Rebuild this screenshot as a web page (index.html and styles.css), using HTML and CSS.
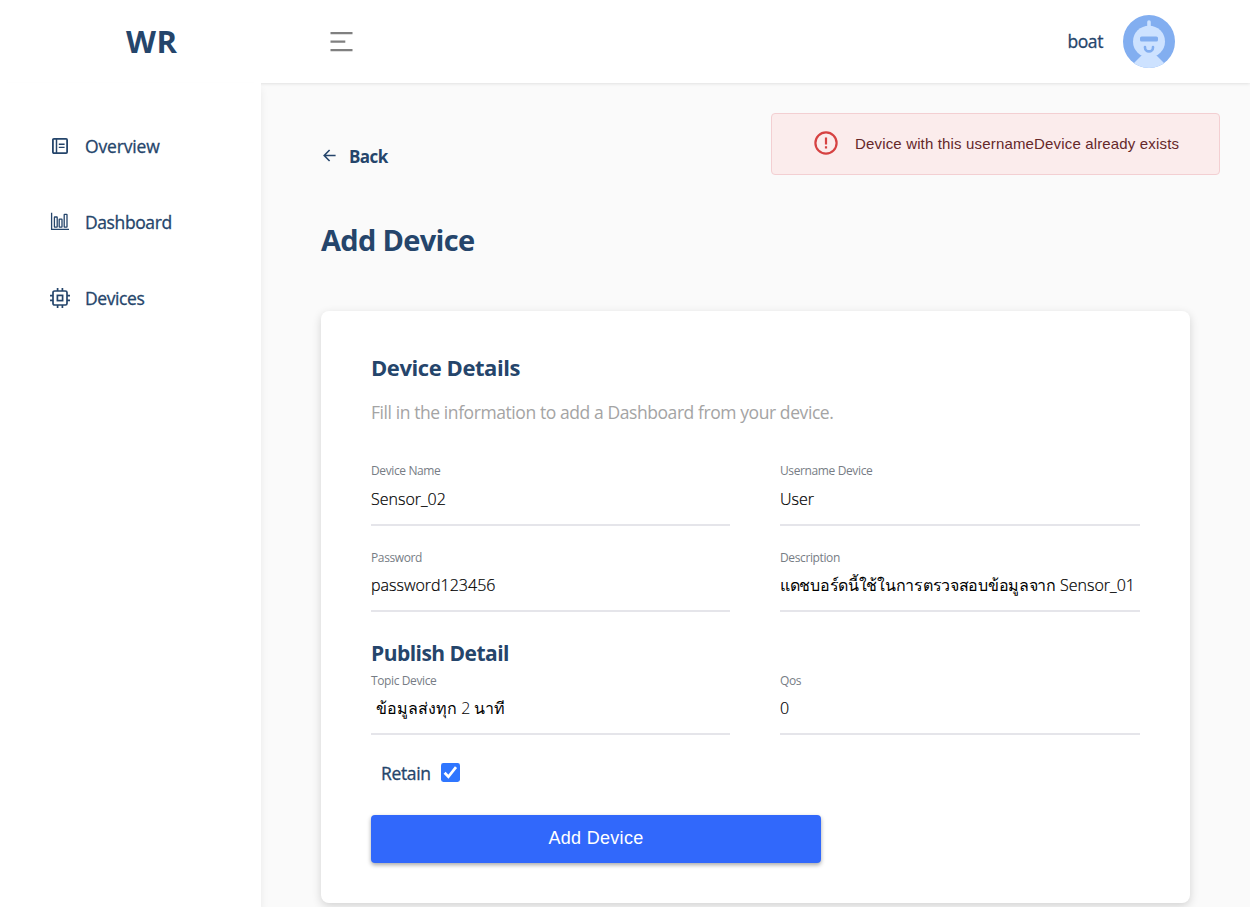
FILE: index.html
```html
<!DOCTYPE html>
<html lang="en">
<head>
<meta charset="utf-8">
<title>Add Device</title>
<link rel="stylesheet" href="styles.css">
</head>
<body>
<div class="app">
  <header class="topbar">
    <div class="brand">WR</div>
    <svg class="menu-icon" viewBox="0 0 24 22" fill="none" stroke="#808080" stroke-width="2.2"><path d="M0.5 2.2H22.5M0.5 10.6H15.3M0.5 19.2H22.5"/></svg>
    <div class="account">
      <span class="user-name">boat</span>
      <svg class="avatar" viewBox="0 0 52 53"><defs><clipPath id="disc"><ellipse cx="26" cy="26.5" rx="26" ry="26.5"/></clipPath></defs><g clip-path="url(#disc)"><rect width="52" height="53" fill="#82aef0"/><g fill="#cde2ff"><path d="M24.2 7a1.8 1.8 0 0 1 3.6 0v6h-3.6z"/><ellipse cx="26" cy="26.5" rx="16" ry="15.8"/><path d="M18.5 40.5h15l8.5 8.5v5H10v-5z"/></g><rect x="17" y="21.5" width="18" height="5" rx="1.6" fill="#82aef0"/><path d="M22 32v.4a4 4 0 0 0 8 0V32" fill="none" stroke="#82aef0" stroke-width="2.6" stroke-linecap="round"/></g></svg>
    </div>
  </header>
  <div class="body">
    <nav class="sidebar">
      <a class="nav-item"><svg class="nav-icon" viewBox="0 0 20 20" fill="none" stroke="currentColor" stroke-width="1.8"><rect x="2.9" y="2.9" width="14.2" height="14.2" rx="1"/><path d="M6.5 3v14" stroke-width="1.5"/><path d="M8.8 8.2h5.8M8.8 11.4h5.8" stroke-width="1.4"/></svg><span class="nav-text wide">Overview</span></a>
      <a class="nav-item"><svg class="nav-icon" viewBox="0 0 20 20" fill="none" stroke="currentColor" stroke-width="1.3"><path d="M1.6 0.8V17.4H19" /><rect x="4.4" y="5" width="2.8" height="10.2" rx=".4"/><rect x="9.2" y="7.2" width="2.8" height="8" rx=".4"/><rect x="14.2" y="2.4" width="2.8" height="12.8" rx=".4"/></svg><span class="nav-text">Dashboard</span></a>
      <a class="nav-item"><svg class="nav-icon" viewBox="0 0 20 20" fill="none" stroke="currentColor" stroke-width="1.7"><rect x="3" y="3" width="14" height="14" rx="1.6"/><rect x="7.4" y="7.4" width="5.2" height="5.2"/><path d="M7.6 0v3M12.4 0v3M7.6 17v3M12.4 17v3M0 7.6h3M0 12.4h3M17 7.6h3M17 12.4h3"/></svg><span class="nav-text">Devices</span></a>
    </nav>
    <main class="content">
      <div class="alert" role="alert">
        <svg class="alert-icon" viewBox="0 0 24 24" fill="none" stroke="#d64242" stroke-width="2.2"><circle cx="12" cy="12" r="10.6"/><path d="M12 6.6v6.8M12 15.2v2.4"/></svg>
        <span>Device with this usernameDevice already exists</span>
      </div>
      <a class="back"><svg class="back-icon" viewBox="0 0 13 13" fill="none" stroke="currentColor" stroke-width="1.6"><path d="M12.6 6.5H1.4M6.6 1L1.2 6.5 6.6 12"/></svg><span>Back</span></a>
      <h1 class="title">Add Device</h1>
      <section class="card">
        <h2 class="card-title">Device Details</h2>
        <p class="hint">Fill in the information to add a Dashboard from your device.</p>
        <div class="fields">
          <div class="field tall"><span class="label">Device Name</span><span class="value">Sensor_02</span></div>
          <div class="field tall"><span class="label">Username Device</span><span class="value">User</span></div>
          <div class="field"><span class="label">Password</span><span class="value">password123456</span></div>
          <div class="field"><span class="label">Description</span><span class="value"><span class="thai">แดชบอร์ดนี้ใช้ในการตรวจสอบข้อมูลจาก</span> Sensor_01</span></div>
        </div>
        <h2 class="section-title">Publish Detail</h2>
        <div class="fields">
          <div class="field"><span class="label">Topic Device</span><span class="value indented">ข้อมูลส่งทุก 2 นาที</span></div>
          <div class="field"><span class="label">Qos</span><span class="value">0</span></div>
        </div>
        <div class="retain"><span>Retain</span><svg class="check" viewBox="0 0 19 19"><rect width="19" height="19" rx="2.4" fill="#2f76ff"/><path d="M3.6 9.8l3.8 4L15 4.2" fill="none" stroke="#fff" stroke-width="2.7"/></svg></div>
        <button class="submit">Add Device</button>
      </section>
    </main>
  </div>
</div>
</body>
</html>
```
FILE: styles.css
```css
* { box-sizing: border-box; }
body { margin: 0; background: #fff; color: #25456b; font-family: "Open Sans", "Noto Sans", sans-serif; }
.app { height: 907px; overflow: hidden; display: flex; flex-direction: column; }
.topbar { position: relative; z-index: 1; height: 83px; flex: none; display: flex; align-items: center; background: #fff; box-shadow: 0 0 4px rgba(0,0,0,.16); }
.brand { width: 261px; height: 83px; flex: none; padding: 0 0 2px 126px; display: flex; align-items: center; background: #fff; font-size: 31px; font-weight: 700; letter-spacing: .6px; }
.menu-icon { width: 24px; height: 22px; margin-left: 69px; }
.account { margin-left: auto; padding-right: 75px; display: flex; align-items: center; gap: 20px; font-size: 17.5px; }
.user-name { letter-spacing: -.4px; padding-bottom: 1px; -webkit-text-stroke: .3px; }
.avatar { width: 52px; height: 53px; display: block; }
.body { flex: 1; min-height: 0; display: flex; }
.sidebar { position: relative; z-index: 2; width: 261px; flex: none; padding: 43px 0 0 50px; display: flex; flex-direction: column; gap: 36px; background: #fff; font-size: 17.5px; box-shadow: 0 6px 8px rgba(0,0,0,.07); }
.nav-item { height: 40px; display: flex; align-items: center; gap: 15px; }
.nav-icon { width: 20px; height: 20px; }
.nav-text { letter-spacing: -.4px; -webkit-text-stroke: .3px; }
.nav-text.wide { letter-spacing: -.15px; }
.content { flex: 1; position: relative; padding: 60px 60px 0; background: #fafafa; }
.alert { position: absolute; right: 30px; top: 30px; width: 449px; height: 62px; padding: 0 0 2px 42px; display: flex; align-items: center; gap: 17px; border: 1px solid #f3cfd2; border-radius: 4px; background: #fbecec; color: #65282a; font: 15px "Liberation Sans", sans-serif; letter-spacing: .16px; }
.alert-icon { width: 24px; height: 24px; }
.back { height: 26px; padding-left: 2px; display: flex; align-items: center; gap: 13px; font-size: 17px; font-weight: 700; letter-spacing: -.6px; }
.back-icon { width: 13px; height: 13px; margin-bottom: 2px; }
.title { margin: 50px 0 0; height: 42px; font-size: 29px; line-height: 42px; font-weight: 700; letter-spacing: -.68px; }
.card { margin-top: 50px; height: 592px; padding: 39px 50px 0; border-radius: 8px; background: #fff; box-shadow: 0 3px 10px rgba(0,0,0,.16); }
.card-title { margin: 0; font-size: 22px; line-height: 34px; font-weight: 700; letter-spacing: -.43px; }
.hint { margin: 14px 0 0; font-size: 17.5px; line-height: 28px; letter-spacing: -.42px; color: #a4a4a4; }
.fields { display: grid; grid-template-columns: 359px 1fr; column-gap: 50px; row-gap: 23px; }
.hint + .fields { margin-top: 36px; }
.field { height: 63px; border-bottom: 2px solid #e5e5ea; display: flex; flex-direction: column; }
.label { font-size: 12px; line-height: 18px; letter-spacing: -.38px; color: #777d85; }
.value { margin-top: 6px; font-size: 16px; line-height: 24px; font-weight: 300; color: #000; white-space: nowrap; -webkit-text-stroke: .2px; }
.thai { letter-spacing: -.28px; -webkit-text-stroke: 0; }
.tall { height: 64px; }
.tall .value { margin-top: 7px; }
.value.indented { padding-left: 5px; -webkit-text-stroke: 0; }
.section-title { margin: 24px 0 0; height: 36px; font-size: 21px; line-height: 34px; font-weight: 700; letter-spacing: -.53px; }
.retain { margin: 24px 0 0 10px; height: 28px; display: flex; align-items: center; gap: 10px; font-size: 17.5px; letter-spacing: -.35px; -webkit-text-stroke: .3px; }
.check { width: 19px; height: 19px; margin-bottom: 2px; }
.submit { margin-top: 28px; width: 450px; height: 48px; display: block; padding: 0 0 2px; border: 0; border-radius: 4px; background: #3168fb; color: #fff; font: 18px "Liberation Sans", sans-serif; letter-spacing: .3px; box-shadow: 0 2px 4px rgba(0,0,0,.35); }
```
